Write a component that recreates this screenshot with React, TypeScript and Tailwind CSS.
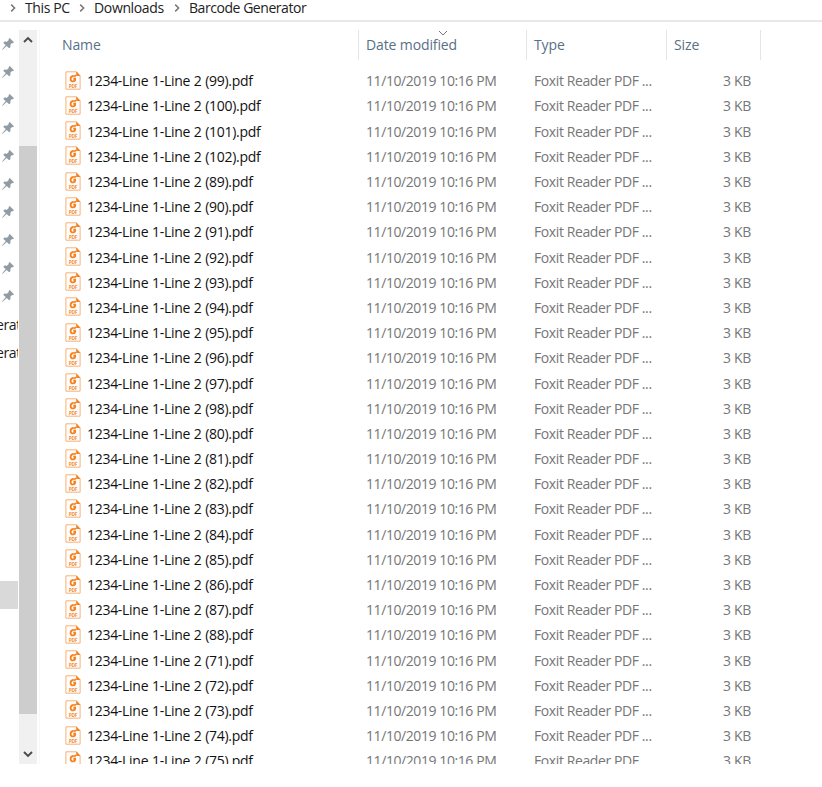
import React from 'react';

const fileNumbers = [
  99, 100, 101, 102, 89, 90, 91, 92, 93, 94, 95, 96, 97, 98,
  80, 81, 82, 83, 84, 85, 86, 87, 88, 71, 72, 73, 74, 75,
];

const breadcrumbs = [
  { label: 'This PC', className: 'w-[44px] tracking-[-0.4px]' },
  { label: 'Downloads', className: 'w-[70px] tracking-[-0.35px]' },
  { label: 'Barcode Generator', className: 'tracking-[-0.45px]' },
];

const PinIcon: React.FC = () => (
  <svg viewBox="0 0 12 12" className="block h-3 w-3" fill="#8f9ca6">
    <path d="M7.7 0 12 4.2 10.9 5.3 10 5.1 8.3 6.8 8.5 9.1 7.2 10.2 4.7 7.9 0.6 11.8 0 11.5 3.8 7.1 1.3 4.9 2.4 3.6 4.8 3.8 6.8 1.9 6.6 1Z" />
  </svg>
);

const PdfIcon: React.FC = () => (
  <svg viewBox="0 0 16 19" className="relative top-[-1px] block h-[19px] w-4 shrink-0">
    <path d="M.9.8h10.3l3.9 4v13.4H.9z" fill="#fffdfb" stroke="#f7b277" />
    <path d="M11.2.3v4.6h4.3z" fill="#f58220" />
    <path
      d="M8.7 5C6.9 4.9 5.6 6.2 5.6 7.9s1.1 2.6 2.4 2.5c1.6-.1 2.4-1.2 2.2-2.7H8.3M10.9 4.1 9.2 5.6"
      fill="none"
      stroke="#f58220"
      strokeWidth="1.9"
    />
    <text
      x="8"
      y="16.5"
      textAnchor="middle"
      fill="#f39443"
      fontSize="4.6"
      fontWeight="700"
      textLength="8.6"
      lengthAdjust="spacingAndGlyphs"
      fontFamily="Open Sans, sans-serif"
    >
      PDF
    </text>
  </svg>
);

interface ChevronProps {
  d: string;
  className: string;
}

const Chevron: React.FC<ChevronProps> = ({ d, className }) => (
  <svg viewBox="0 0 10 10" className={className} fill="none" stroke="currentColor">
    <path d={d} />
  </svg>
);

const AddressBar: React.FC = () => (
  <div className="flex h-[22px] shrink-0 items-start border-b-2 border-[#e8e8e8] pl-2 text-[14px] leading-4 text-[#222]">
    {breadcrumbs.map((item) => (
      <div key={item.label} className="flex">
        <Chevron d="M3.2 1.6 6.6 5 3.2 8.4" className="mt-[3px] mr-[7px] h-2.5 w-2.5 stroke-[1.5] text-[#777]" />
        <span className={`mr-2 whitespace-nowrap ${item.className}`}>{item.label}</span>
      </div>
    ))}
  </div>
);

const NavigationPane: React.FC = () => (
  <div className="w-[19px] shrink-0 overflow-hidden">
    {Array.from({ length: 10 }, (_, index) => (
      <div key={index} className="flex h-7 items-center pl-[2px]">
        <PinIcon />
      </div>
    ))}
    {['first', 'second'].map((key) => (
      <div key={key} className="flex h-7 w-[18px] items-center overflow-hidden text-[14px] tracking-[-0.4px] text-[#222]">
        <span className="-ml-[4px]">erat</span>
      </div>
    ))}
    <div className="mt-[215px] h-7 w-[18px] bg-[#d9d9d9]" />
  </div>
);

const ScrollBar: React.FC = () => (
  <div className="flex w-[18px] shrink-0 flex-col items-center bg-[#f0f0f0]">
    <Chevron d="M1 7 5 3 9 7" className="mt-[5px] h-2.5 w-2.5 stroke-[1.9] text-[#4a4a4a]" />
    <div className="mt-[101px] h-[568px] w-full bg-[#cdcdcd]" />
    <Chevron d="M1 3 5 7 9 3" className="mt-[35px] h-2.5 w-2.5 stroke-[1.9] text-[#4a4a4a]" />
  </div>
);

const ListHeader: React.FC = () => (
  <div className="flex h-[30px] shrink-0 text-[14px] leading-[30px] tracking-[-0.12px] text-[#587087]">
    <div className="w-[318px] pl-[22px]">Name</div>
    <div className="relative w-[168px] border-l border-[#e5e5e5] pl-[7px]">
      Date modified
      <Chevron d="M1 3 5 7 9 3" className="absolute top-[-2px] left-[79px] h-2.5 w-2.5 text-[#777]" />
    </div>
    <div className="w-[140px] border-l border-[#e5e5e5] pl-[7px]">Type</div>
    <div className="w-[95px] border-x border-[#e5e5e5] pl-[7px]">Size</div>
  </div>
);

interface FileRowProps {
  number: number;
}

const FileRow: React.FC<FileRowProps> = ({ number }) => (
  <div className="flex h-[25.19px] shrink-0 items-center whitespace-nowrap text-[14px] leading-5 text-[#767676]">
    <div className="flex w-[326px] items-center pl-[25px] tracking-[-0.29px] text-[#111]">
      <PdfIcon />
      <span className="ml-[6px] [word-spacing:0.4px]">1234-Line 1-Line 2 ({number}).pdf</span>
    </div>
    <div className="w-[168px] tracking-[-0.42px]">11/10/2019 10:16 PM</div>
    <div className="w-[140px] tracking-[-0.4px]">Foxit Reader PDF ...</div>
    <div className="w-[77px] text-right tracking-[-0.3px]">3 KB</div>
  </div>
);

const App: React.FC = () => {
  return (
    <div className="flex h-[787px] w-[822px] flex-col overflow-hidden bg-white font-['Open_Sans',sans-serif]">
      <AddressBar />
      <div className="mt-2 flex h-[733.5px]">
        <NavigationPane />
        <ScrollBar />
        <div className="ml-[2px] flex min-w-0 flex-1 flex-col overflow-hidden border-l border-[#f7f7f7]">
          <ListHeader />
          <div className="flex min-h-0 flex-1 flex-col overflow-hidden pt-[8.7px]">
            {fileNumbers.map((number) => (
              <FileRow key={number} number={number} />
            ))}
          </div>
        </div>
      </div>
    </div>
  );
};

export default App;
